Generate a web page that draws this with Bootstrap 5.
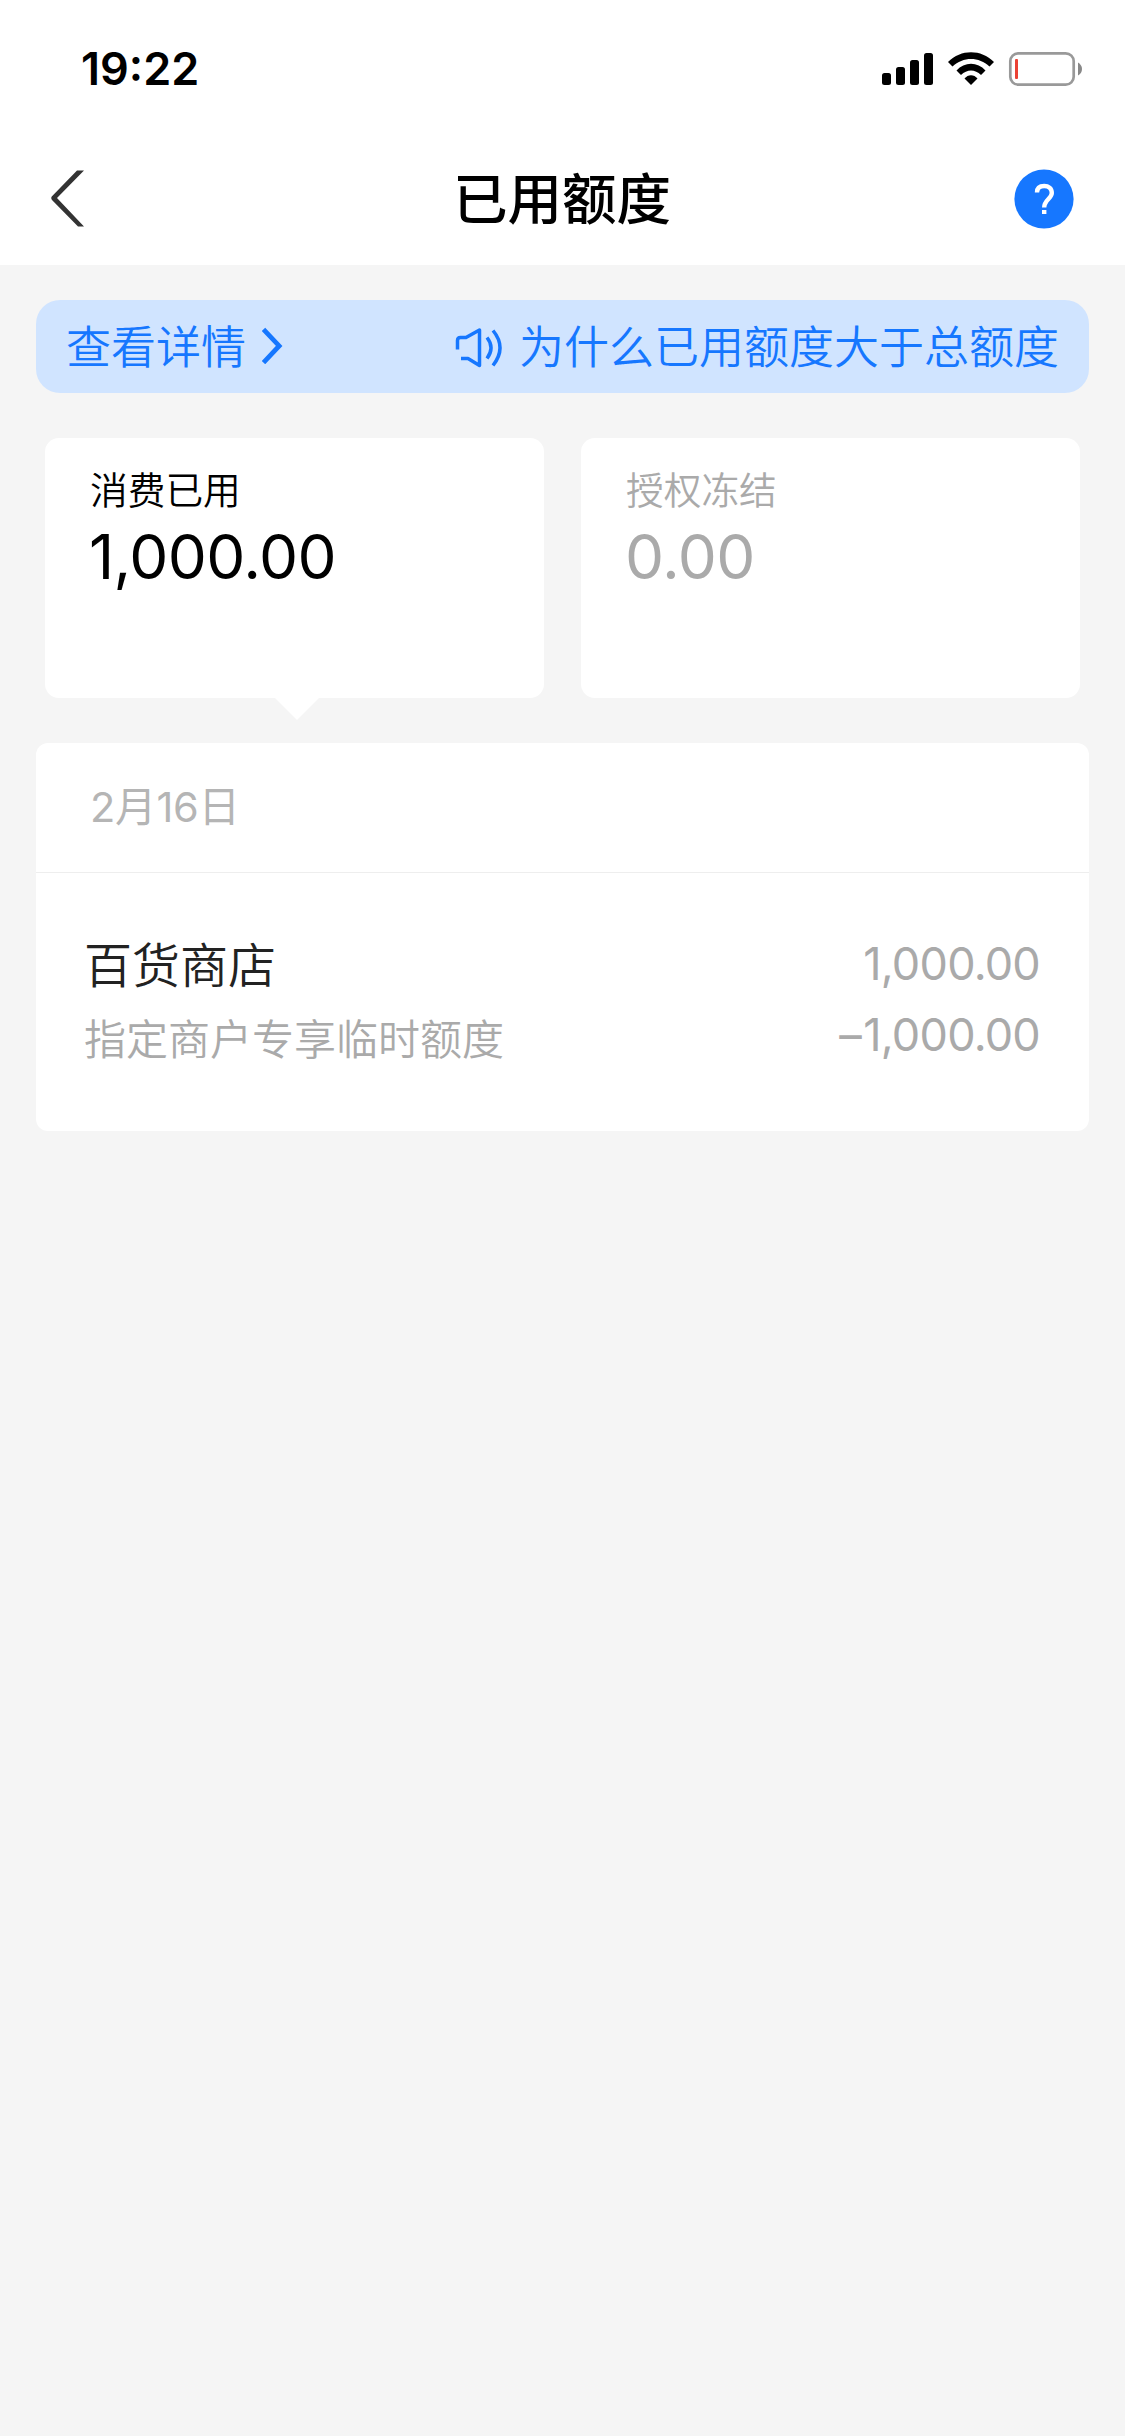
<!DOCTYPE html>
<html lang="zh-CN">
<head>
<meta charset="utf-8">
<meta name="viewport" content="width=device-width, initial-scale=1">
<title>已用额度</title>
<link href="https://cdn.jsdelivr.net/npm/bootstrap@5.3.0/dist/css/bootstrap.min.css" rel="stylesheet">
<style>
  body { background: #f5f5f5; color: #000; font-family: Inter, "Noto Sans CJK SC", sans-serif; min-height: 2436px; }
  svg { display: block; flex: none; }
  .status-bar { height: 132px; padding: 46px 43px 0 81px; }
  .clock { font-size: 45px; font-weight: 600; line-height: 46px; }
  .title-bar { height: 133px; padding: 0 51px; }
  .title-bar h1 { font-size: 54.5px; font-weight: 500; line-height: 60px; padding-right: 1px; }
  .notice { height: 93px; margin: 35px 36px 0; padding: 0 30px 3px 30px; border-radius: 24px; background: #d0e4ff; color: #1677ff; font-size: 45px; line-height: 60px; }
  .cn-thin { font-family: "Noto Sans CJK SC", sans-serif; font-weight: 350; }
  .tabs-row { margin: 45px 45px 0; gap: 37px; }
  .quota { height: 260px; border-radius: 14px; padding: 22px 45px; }
  .quota .label { font-size: 37.7px; line-height: 56px; }
  .quota .sum { font-size: 62px; line-height: 76px; font-weight: 400; margin-top: 3px; margin-left: -1px; letter-spacing: -.6px; }
  .quota.active::after { content: ""; position: absolute; left: 229px; top: 259px; border: 23px solid transparent; border-top-color: #fff; border-bottom: 0; }
  .muted-a { color: #aaa; }
  .bill { margin: 45px 36px 0; border-radius: 12px; height: 388px; }
  .bill-date { height: 130px; padding: 0 54px; border-bottom: 1px solid #eee; color: #b5b5b5; font-size: 41.5px; font-weight: 400; letter-spacing: -.2px; }
  .bill-row { padding: 56px 49px 0 48px; }
  .shop { font-size: 48px; line-height: 70px; margin-top: -2px; color: #222; }
  .desc { font-size: 42px; line-height: 60px; margin-top: 10px; }
  .amt { font-size: 45px; line-height: 71px; font-weight: 400; letter-spacing: -.75px; margin-top: -1px; }
  .minus { letter-spacing: 1.5px; }
</style>
</head>
<body>
<header class="bg-white">
  <div class="status-bar d-flex justify-content-between align-items-start">
    <span class="clock">19:22</span>
    <svg width="201" height="46" viewBox="881 46 201 46">
      <rect x="882" y="73" width="9" height="12" rx="2.5"/><rect x="896" y="67" width="9" height="18" rx="2.5"/>
      <rect x="910" y="60" width="9" height="25" rx="2.5"/><rect x="924" y="53" width="9" height="32" rx="2.5"/>
      <path d="M948 62C961 49 981 49 994 62L989.500 66.500C979 56.500 963 56.500 952.500 66.500Z"/>
      <path d="M956.500 70.500C964.500 61.500 977.500 61.500 985.500 70.500L981 75C975 69 967 69 961 75Z"/>
      <path d="M964.500 78.500C968 74 974 74 977.500 78.500L971 85Z"/>
      <rect x="1010.300" y="53.300" width="63.400" height="31.400" rx="8" fill="none" stroke="#999" stroke-width="2.700"/>
      <rect x="1015" y="59" width="3" height="20" rx="1" fill="#eb4235"/>
      <path d="M1078 62.500Q1082 65 1082 69T1078 75.500Z" fill="#888"/>
    </svg>
  </div>
  <div class="title-bar d-flex justify-content-between align-items-center">
    <svg width="60" height="60" viewBox="51 168.500 60 60"><path d="M77 170H84L57 197.500L84 226H78L52 199.500Q50.500 197.500 52 195.800Z" fill="#333"/></svg>
    <h1 class="m-0">已用额度</h1>
    <svg width="60" height="60" viewBox="0 0 60 60"><circle cx="30" cy="30" r="29.600" fill="#1677ff"/><path d="M23 23.500C23 18.500 26 17 30.200 17S37.800 19 37.800 24C37.800 29.500 30.200 31 30.200 38.500" fill="none" stroke="#fff" stroke-width="4.400"/><rect x="28" y="41" width="4.400" height="4" fill="#fff"/></svg>
  </div>
</header>
<main>
  <div class="notice cn-thin d-flex justify-content-between align-items-center">
    <span class="d-flex align-items-center"><span>查看详情</span>
      <svg class="ms-3" width="22" height="38" viewBox="1 -1 22 40"><path d="M2 2.500L18.500 20L2 37.500" fill="none" stroke="#1677ff" stroke-width="5"/></svg></span>
    <span class="d-flex align-items-center">
      <svg class="me-3" width="48" height="40" viewBox="456 325.500 48 40" fill="none" stroke="#1677ff" stroke-width="3.500" overflow="visible"><path d="M458.500 350V341Q458.500 338 461.500 338H467L480.500 330.500V366L469 359H462" stroke-linejoin="round"/><path d="M488 338Q496 348 488 359M494 331Q508 348 494 366"/></svg>
      <span>为什么已用额度大于总额度</span></span>
  </div>
  <div class="tabs-row d-flex">
    <section class="quota active bg-white position-relative flex-fill w-50">
      <div class="label cn-thin">消费已用</div>
      <div class="sum">1,000.00</div>
    </section>
    <section class="quota bg-white flex-fill w-50 muted-a">
      <div class="label cn-thin">授权冻结</div>
      <div class="sum">0.00</div>
    </section>
  </div>
  <section class="bill bg-white">
    <div class="bill-date d-flex align-items-center">2月16日</div>
    <div class="bill-row d-flex justify-content-between">
      <div>
        <div class="shop cn-thin">百货商店</div>
        <div class="desc cn-thin muted-a">指定商户专享临时额度</div>
      </div>
      <div class="amt text-end muted-a">
        <div>1,000.00</div>
        <div><span class="minus">–</span>1,000.00</div>
      </div>
    </div>
  </section>
</main>
<script src="https://cdn.jsdelivr.net/npm/bootstrap@5.3.0/dist/js/bootstrap.bundle.min.js"></script>
</body>
</html>
